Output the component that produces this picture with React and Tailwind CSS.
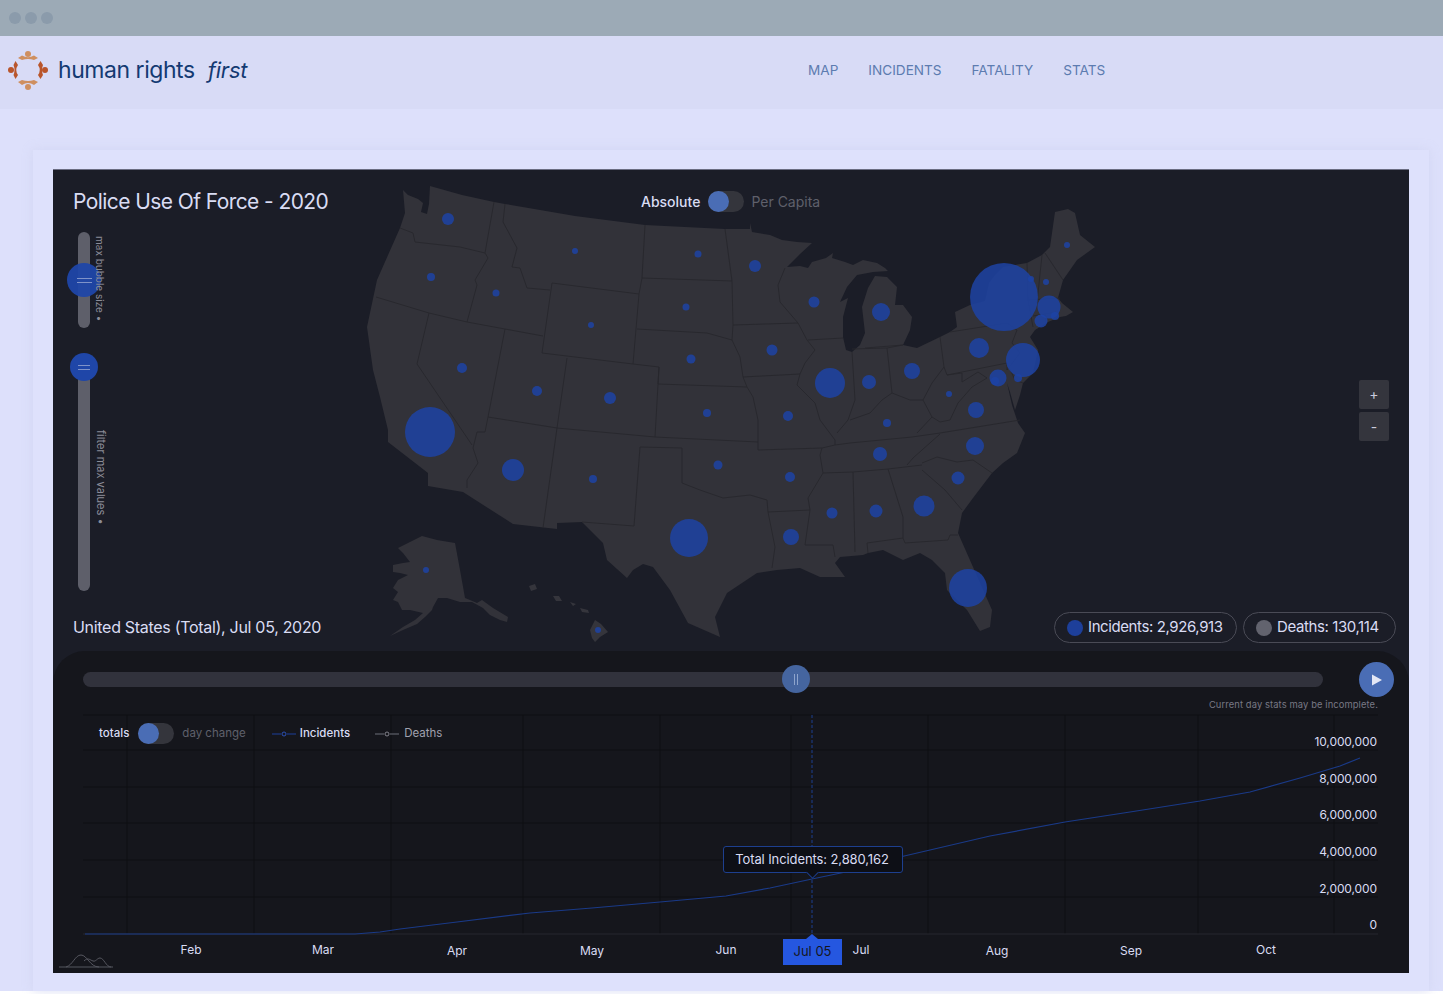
import React from "react";

const lower48 =
  "M403 190 L408 195 L418 199 L423 203 L421 212 L427 214 L429 204 L430 186 L462 195 L494 202 L505 204 L575 216 L645 225 L725 229 L750 229 L750 223 L752 232 L770 235 L782 240 L797 242 L812 243 L800 254 L787 267 L800 266 L808 268 L812 262 L826 258 L833 253 L832 258 L845 262 L853 265 L863 260 L877 263 L885 268 L888 271 L873 272 L857 275 L847 287 L840 302 L848 298 L843 317 L843 337 L846 350 L852 352 L860 345 L865 333 L862 307 L868 288 L875 276 L887 277 L897 287 L895 305 L903 305 L912 317 L910 330 L903 345 L917 348 L940 337 L950 332 L957 327 L955 312 L970 305 L985 301 L989 283 L995 275 L1003 267 L1027 263 L1042 255 L1050 247 L1055 212 L1068 209 L1075 213 L1080 235 L1095 247 L1077 260 L1063 280 L1058 298 L1062 303 L1073 312 L1066 316 L1060 317 L1048 322 L1035 330 L1030 337 L1038 350 L1033 373 L1023 383 L1020 395 L1015 410 L1010 392 L1007 383 L1012 405 L1018 423 L1025 433 L1017 453 L1003 463 L992 473 L973 498 L962 513 L958 533 L973 567 L992 610 L990 627 L980 631 L967 610 L947 590 L945 573 L932 560 L920 553 L903 560 L883 550 L868 553 L863 555 L840 557 L835 563 L845 577 L820 577 L800 568 L777 570 L757 573 L727 593 L715 617 L720 637 L688 623 L670 590 L653 567 L643 564 L633 570 L627 578 L607 560 L603 543 L582 522 L557 523 L557 529 L513 524 L463 492 L428 486 L428 473 L388 442 L388 430 L380 397 L373 370 L367 327 L377 280 L400 228 L405 213 Z";

const alaska =
  "M422 536 L437 540 L455 543 L460 570 L465 598 L470 600 L477 603 L482 600 L493 608 L508 617 L507 622 L500 620 L490 615 L483 608 L472 602 L460 602 L447 598 L438 598 L433 607 L432 610 L425 617 L417 624 L403 630 L390 636 L403 627 L415 620 L423 613 L410 610 L402 610 L398 602 L393 600 L398 592 L393 588 L398 580 L408 575 L400 573 L393 572 L393 565 L403 563 L410 562 L403 553 L398 548 L410 542 Z";

const hawaii =
  "M595 620 L601 624 L608 632 L600 637 L595 642 L592 638 L590 630 Z M529 586 L535 584 L537 589 L531 591 Z M553 596 L559 596 L562 601 L556 601 Z M570 602 L576 604 L573 606 Z M580 608 L588 610 L589 613 L582 612 Z";

// inner state lines
const borders = [
  "M400 228 L413 233 L415 242 L460 247 L485 253",
  "M494 202 L485 253 L488 258 L475 280 L477 285 L467 322",
  "M376 297 L429 313 L467 322 L505 329 L543 336",
  "M505 204 L503 222 L517 248 L512 267 L520 268 L527 288 L550 290",
  "M552 283 L639 294 L633 364 L542 353 Z",
  "M645 225 L642 278 L639 294",
  "M642 278 L732 281",
  "M725 229 L732 281 L733 325 L732 340",
  "M637 329 L707 333 L732 340 L740 357 L743 377 L747 387 L753 397 L758 420 L758 450",
  "M633 364 L659 367 L658 384 L747 387",
  "M659 367 L655 437 L758 442",
  "M567 358 L557 428 L655 437",
  "M505 329 L488 417 L557 428",
  "M429 313 L417 364 L472 445",
  "M488 417 L485 432 L477 432 L473 448 L478 463 L467 480 L467 488",
  "M557 428 L543 528",
  "M640 447 L634 526 L582 522",
  "M640 447 L682 448 L682 483 L700 490 L723 498 L750 495 L767 500 L768 512 L775 547 L772 568",
  "M758 450 L822 448 L820 455 L823 473 L808 498 L810 510 L768 512",
  "M810 510 L805 545 L833 545 L835 557",
  "M823 473 L853 472 L888 469 L922 465",
  "M853 472 L855 552",
  "M888 469 L903 517 L903 538 L905 543 L948 540 L950 535 L958 535",
  "M867 543 L903 538 M867 543 L868 553",
  "M922 470 L945 490 L962 510",
  "M922 463 L937 457 L957 462 L973 460 L992 473",
  "M907 465 L913 458 L940 434",
  "M822 448 L835 445 L850 443 L912 437 L940 433 L1020 420",
  "M743 377 L800 374 L797 385 L815 403 L820 420 L835 440 L835 445",
  "M733 325 L798 323 L807 340 L815 350 L805 363 L800 374",
  "M785 268 L778 285 L780 302 L798 323",
  "M808 340 L843 338",
  "M852 352 L855 400 L848 420 L837 433",
  "M852 349 L887 348 L892 393 L882 400 L870 413 L850 420",
  "M865 348 L903 345",
  "M887 348 L903 345",
  "M940 337 L944 367 L932 383 L923 400 L910 400 L892 393",
  "M950 332 L1007 323 L1017 330 L1012 343 L1020 353 L1007 370 L1007 363 L947 375",
  "M944 367 L947 375 L962 373 L962 382 L978 372 L987 378 L972 387 L958 403 L950 420 L940 422 L932 417 L923 400",
  "M932 417 L917 433",
  "M1007 363 L1015 380 L1023 383",
  "M1042 255 L1037 303",
  "M1027 263 L1028 300 L1033 327",
  "M1045 253 L1063 280",
  "M1028 300 L1060 298",
  "M1033 316 L1056 312 L1058 320",
  "M1045 313 L1046 323",
];

const bubbles = [
  [448, 219, 6], [431, 277, 4], [496, 293, 3.5], [575, 251, 3], [591, 325, 3], [462, 368, 5],
  [537, 391, 5], [610, 398, 6], [430, 432, 25], [513, 470, 11], [593, 479, 4], [689, 538, 19],
  [426, 570, 3], [598, 630, 3], [698, 254, 3.5], [686, 307, 3.5], [691, 359, 4.5], [707, 413, 4],
  [718, 465, 4.5], [755, 266, 6], [772, 350, 5.5], [788, 416, 5], [790, 477, 5], [791, 537, 8],
  [814, 302, 5.5], [830, 383, 15], [869, 382, 7], [881, 312, 9], [912, 371, 8], [887, 423, 4],
  [880, 454, 7], [832, 513, 5.5], [876, 511, 6.5], [924, 506, 10.5], [958, 478, 6.5], [975, 446, 9],
  [976, 410, 8], [949, 394, 3], [979, 348, 10], [1004, 297, 34], [1023, 360, 17], [998, 378, 8.5],
  [995, 381, 4], [1018, 378, 4], [1067, 245, 3], [1046, 282, 3], [1031, 279, 3], [1049, 307, 11.5],
  [1041, 321, 6.5], [1055, 316, 4], [968, 588, 19],
];

const months = [
  ["Feb", 191, 950], ["Mar", 323, 950], ["Apr", 457, 951], ["May", 592, 951], ["Jun", 726, 950],
  ["Jul", 861, 950], ["Aug", 997, 951], ["Sep", 1131, 951], ["Oct", 1266, 950],
];

const yTicks = [
  ["10,000,000", 742], ["8,000,000", 779], ["6,000,000", 815], ["4,000,000", 852], ["2,000,000", 889], ["0", 925],
];

const gridX = [127, 254, 391, 523, 660, 791, 928, 1065, 1198, 1334];
const gridY = [715, 750, 787, 823, 860, 897];
const linePts =
  "85,934 355,934 380,932 400,929 457,922 530,913 592,908 660,902 726,896 770,888 812,879 860,869 900,857 990,836 1065,822 1130,812 1200,801 1250,792 1300,778 1340,766 1360,758";

const Logo = () => (
  <svg width="42" height="42" viewBox="7 48 42 42" className="shrink-0">
    <g fill="#cf8f5f">
      <circle cx="28" cy="53" r="3" />
      <circle cx="28" cy="86" r="3" />
      <path d="M18 57 L22 54.500 Q28 58 34 54.500 L38 57 L34 59 Q28 57 22 59 Z" />
      <path d="M18 81 L22 79 Q28 81 34 79 L38 81 L34 84 Q28 80 22 84 Z" />
    </g>
    <g fill="#b9552b">
      <circle cx="11" cy="69" r="3" />
      <circle cx="45" cy="69" r="3" />
      <path d="M15.500 60 L18 64 Q14.500 69 18 74 L15.500 78 L13.500 74 Q15.500 69 13.500 64 Z" />
      <path d="M40.500 60 L43 64 Q41 69 43 74 L40.500 78 L38 74 Q41.500 69 38 64 Z" />
    </g>
  </svg>
);

const Toggle = () => (
  <div className="relative h-[21px] w-[36px] rounded-full bg-[#34353c]">
    <div className="absolute left-0 top-0 h-[21px] w-[21px] rounded-full bg-[#4a6db5]" />
  </div>
);

const Grip = ({ w }) => (
  <div className={`flex flex-col gap-[3px] ${w}`}>
    <div className="h-px bg-[#7f93c9]" />
    <div className="h-px bg-[#7f93c9]" />
  </div>
);

export default function App() {
  return (
    <div className="h-[994px] w-full overflow-hidden bg-white font-['Inter',sans-serif]">
      <div className="flex h-[991px] flex-col bg-[#dde0fb]">
        {/* window bar */}
        <div className="flex h-[36px] items-center gap-[4px] bg-[#9caab6] pl-[9px]">
          <span className="h-3 w-3 rounded-full bg-[#8b9bab]" />
          <span className="h-3 w-3 rounded-full bg-[#8b9bab]" />
          <span className="h-3 w-3 rounded-full bg-[#8b9bab]" />
        </div>

        {/* nav */}
        <header className="relative flex h-[73px] items-center bg-[#d8dbf6] pb-[6px] pl-[7px]">
          <Logo />
          <div className="ml-[9px] mt-[2px] whitespace-nowrap text-[23px] tracking-[-0.45px] text-[#143a72]">human rights</div>
          <div className="ml-[13px] mt-[2px] whitespace-nowrap text-[22px] italic tracking-[-0.2px] text-[#143a72]">first</div>
          <nav className="absolute left-[808px] top-0 flex h-[68px] items-center gap-[30px] text-[13.600px] text-[#5d7cb0]">
            <span>MAP</span>
            <span>INCIDENTS</span>
            <span>FATALITY</span>
            <span>STATS</span>
          </nav>
        </header>

        {/* card */}
        <div className="ml-[33px] mr-[14px] mt-[41px] flex-1 bg-[#dee1fc] px-[20px] pb-[18px] pt-[20px] shadow-[0_0_10px_rgba(205,209,240,0.7)]">
          <div className="flex h-[803px] flex-col bg-[#1b1d27] text-[#d9dcf3] shadow-[0_-1px_0_#6b6d82]">
            {/* map */}
            <section className="relative h-[481px] shrink-0">
              <svg className="absolute inset-0" width="1356" height="481" viewBox="53 170 1356 481">
                <path d={lower48} fill="#323239" strokeLinejoin="round" />
                <path d={alaska} fill="#323239" />
                <path d={hawaii} fill="#35353c" />
                {borders.map((d, i) => (
                  <path key={i} d={d} fill="none" stroke="#27272d" strokeWidth="0.9" />
                ))}
                {bubbles.map(([cx, cy, r], i) => (
                  <circle key={i} cx={cx} cy={cy} r={r} fill="#1d43a5" fillOpacity="0.85" />
                ))}
              </svg>

              <h1 className="absolute left-[20px] top-[16px] whitespace-nowrap text-[21px] font-normal tracking-[-0.58px]">
                Police Use Of Force - 2020
              </h1>

              <div className="absolute left-[588px] top-[21px] flex items-center gap-[8px] text-[14px]">
                <span className="font-medium">Absolute</span>
                <Toggle />
                <span className="ml-[-1px] text-[#5f606b]">Per Capita</span>
              </div>

              {/* bubble size slider */}
              <div className="absolute left-[25px] top-[62px] h-[96px] w-[12px] rounded-full bg-[#5e5f6a]" />
              <div className="absolute left-[14px] top-[93px] flex h-[34px] w-[34px] items-center justify-center rounded-full bg-[#1f46a8]/95">
                <Grip w="w-[15px]" />
              </div>
              <div className="absolute left-[39px] top-[66px] text-[10px] text-[#8b8c98] [writing-mode:vertical-rl]">max bubble size •</div>

              {/* max value slider */}
              <div className="absolute left-[25px] top-[197px] h-[224px] w-[12px] rounded-full bg-[#5e5f6a]" />
              <div className="absolute left-[17px] top-[183px] flex h-[28px] w-[28px] items-center justify-center rounded-full bg-[#1f46a8]">
                <Grip w="w-[12px]" />
              </div>
              <div className="absolute left-[39px] top-[260px] text-[11px] text-[#8b8c98] [writing-mode:vertical-rl]">filter max values •</div>

              {/* zoom */}
              <div className="absolute left-[1306px] top-[210px] flex flex-col gap-[3px] text-[#c9cbdc]">
                <button className="h-[29px] w-[30px] rounded-[2px] bg-[#34353d] pb-[3px] text-[14px]">+</button>
                <button className="h-[29px] w-[30px] rounded-[2px] bg-[#34353d] text-[14px]">-</button>
              </div>

              <div className="absolute left-[20px] top-[445px] whitespace-nowrap text-[16px] tracking-[-0.3px]">
                United States (Total), Jul 05, 2020
              </div>

              <div className="absolute right-[13px] top-[442px] flex gap-[6px] text-[15px] tracking-[-0.4px]">
                <div className="flex h-[31px] w-[183px] items-center gap-[5px] rounded-full border border-[#4a4b56] pl-[12px]">
                  <span className="h-4 w-4 rounded-full bg-[#1d3f9a]" />
                  Incidents: 2,926,913
                </div>
                <div className="flex h-[31px] w-[153px] items-center gap-[5px] rounded-full border border-[#4a4b56] pl-[12px]">
                  <span className="h-4 w-4 rounded-full bg-[#62636e]" />
                  Deaths: 130,114
                </div>
              </div>
            </section>

            {/* timeline */}
            <section className="relative flex-1 overflow-hidden rounded-t-[32px] bg-[#15161c]">
              <svg className="absolute inset-0" width="1356" height="322" viewBox="53 651 1356 322">
                {gridX.map((x) => (
                  <line key={x} x1={x} x2={x} y1="715" y2="934" stroke="#0e0f13" />
                ))}
                {gridY.map((y) => (
                  <line key={y} x1="83" x2="1378" y1={y} y2={y} stroke="#0e0f13" />
                ))}
                <line x1="83" x2="1378" y1="934" y2="934" stroke="#26272e" />
                <line x1="812" x2="812" y1="715" y2="934" stroke="#1d3f8f" strokeDasharray="3 2" />
                <polyline points={linePts} fill="none" stroke="#1a3a88" strokeWidth="1.200" />
                <path d="M812 934 L806 939 L818 939 Z" fill="#2557e0" />
                <path d="M59 967 L113 967 M66 967 C73 965 75 955 81 955 C87 955 90 967 99 967 M84 961 C88 957 90 960 93 961 C96 962 97 958 100 958 C104 958 106 967 111 967" fill="none" stroke="#55565f" strokeWidth="1" />
              </svg>

              <div className="absolute left-[30px] top-[21px] h-[15px] w-[1240px] rounded-full bg-[#31323c]" />
              <div className="absolute left-[729px] top-[14px] flex h-[28px] w-[28px] items-center justify-center gap-[2px] rounded-full bg-[#45659f]">
                <span className="h-[11px] w-px bg-[#8ea4cc]" />
                <span className="h-[11px] w-px bg-[#8ea4cc]" />
              </div>
              <div className="absolute left-[1306px] top-[11px] flex h-[35px] w-[35px] items-center justify-center rounded-full bg-[#4a6db5]">
                <svg width="12" height="12" viewBox="0 0 12 12">
                  <path d="M1 0.500 L11 6 L1 11.500 Z" fill="#e3e6f5" />
                </svg>
              </div>
              <div className="absolute right-[31px] top-[47px] whitespace-nowrap text-[9.400px] tracking-[0.1px] text-[#787985]">
                Current day stats may be incomplete.
              </div>

              {/* legend */}
              <div className="absolute left-[46px] top-[72px] flex items-center text-[11.500px]">
                <span className="font-medium">totals</span>
                <div className="ml-[9px]">
                  <Toggle />
                </div>
                <span className="ml-[8px] text-[#5f606b]">day change</span>
                <svg width="24" height="6" className="ml-[26px]">
                  <path d="M0 3 H9 M15 3 H24" stroke="#1d3f9a" />
                  <circle cx="12" cy="3" r="2" fill="none" stroke="#2a50b5" />
                </svg>
                <span className="ml-[4px] font-medium">Incidents</span>
                <svg width="24" height="6" className="ml-[25px]">
                  <path d="M0 3 H9 M15 3 H24" stroke="#6d6e78" />
                  <circle cx="12" cy="3" r="2" fill="none" stroke="#80818b" />
                </svg>
                <span className="ml-[5px] text-[#a0a1ae]">Deaths</span>
              </div>

              {/* axis labels */}
              {yTicks.map(([t, y]) => (
                <span key={t} className="absolute right-[32px] -translate-y-1/2 text-[12px] tracking-[-0.1px]" style={{ top: y - 651 }}>
                  {t}
                </span>
              ))}
              {months.map(([m, x, y]) => (
                <span key={m} className="absolute -translate-x-1/2 -translate-y-1/2 text-[12px]" style={{ left: x - 53, top: y - 651 }}>
                  {m}
                </span>
              ))}

              <div className="absolute left-[730px] top-[288px] flex h-[26px] w-[59px] items-center justify-center bg-[#2557e0] text-[13px] text-[#15161c]">
                Jul 05
              </div>

              {/* tooltip */}
              <div className="absolute left-[670px] top-[195px] flex h-[27px] w-[180px] items-center justify-center rounded-[3px] border border-[#1d3f8f] bg-[#0d0f16] pr-[2px] text-[13px] tracking-[-0.1px]">
                Total Incidents: 2,880,162
                <span className="absolute left-[84px] top-[21px] h-[9px] w-[9px] rotate-45 border-b border-r border-[#1d3f8f] bg-[#0d0f16]" />
              </div>
            </section>
          </div>
        </div>
      </div>
    </div>
  );
}
